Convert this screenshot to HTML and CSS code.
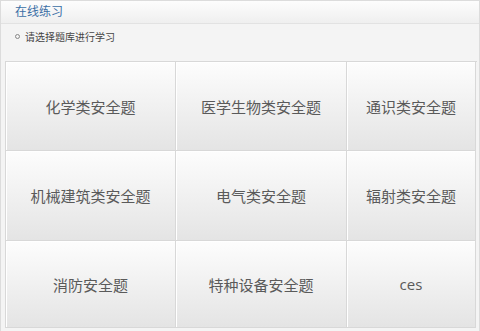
FILE: index.html
```html
<!DOCTYPE html>
<html lang="zh-CN">
<head>
  <meta charset="UTF-8" />
  <meta name="viewport" content="width=device-width, initial-scale=1.0" />
  <title>在线练习</title>
  <link rel="stylesheet" href="styles.css">
</head>
<body>
  <div class="panel">
    <div class="panel-head">在线练习</div>
    <div class="panel-tip"><span class="dot"></span>请选择题库进行学习</div>
    <div class="bank-grid">
      <a class="bank">化学类安全题</a>
      <a class="bank">医学生物类安全题</a>
      <a class="bank">通识类安全题</a>
      <a class="bank">机械建筑类安全题</a>
      <a class="bank">电气类安全题</a>
      <a class="bank">辐射类安全题</a>
      <a class="bank">消防安全题</a>
      <a class="bank">特种设备安全题</a>
      <a class="bank">ces</a>
    </div>
  </div>
</body>
</html>
```

FILE: styles.css
```css
body {
  margin: 0;
  padding: 0;
  background-color: #fff;
  font-family: "Open Sans", "Noto Sans CJK SC", sans-serif;
  color: #555;
}
.panel {
  border: 1px solid #dcdcdc;
  border-bottom: none;
  background-color: #f4f4f4;
  height: 330px;
}
.panel-head {
  height: 22px;
  line-height: 22px;
  padding-left: 14px;
  font-size: 12px;
  color: #3a6ea5;
  background: linear-gradient(#fdfdfd, #efefef);
  border-bottom: 1px solid #e2e2e2;
}
.panel-tip {
  height: 37px;
  display: flex;
  align-items: center;
  padding-left: 14px;
  font-size: 10px;
  color: #444;
  box-sizing: border-box;
  padding-bottom: 13px;
}
.dot {
  width: 3px;
  height: 3px;
  border: 1px solid #888;
  border-radius: 50%;
  margin-right: 5px;
}
.bank-grid {
  display: grid;
  grid-template-columns: 170px 171px 129px;
  grid-template-rows: 89px 90px 87px;
  margin-left: 4px;
  width: 471px;
  border-top: 1px solid #d8d8d8;
  border-left: 1px solid #d8d8d8;
}
.bank {
  display: flex;
  align-items: center;
  justify-content: center;
  font-size: 15px;
  color: #5a5a5a;
  border-right: 1px solid #d8d8d8;
  border-bottom: 1px solid #d8d8d8;
  background: linear-gradient(#fdfdfd, #e4e4e4);
  box-shadow: inset 1px 1px 0 #fff;
  cursor: pointer;
}
```
